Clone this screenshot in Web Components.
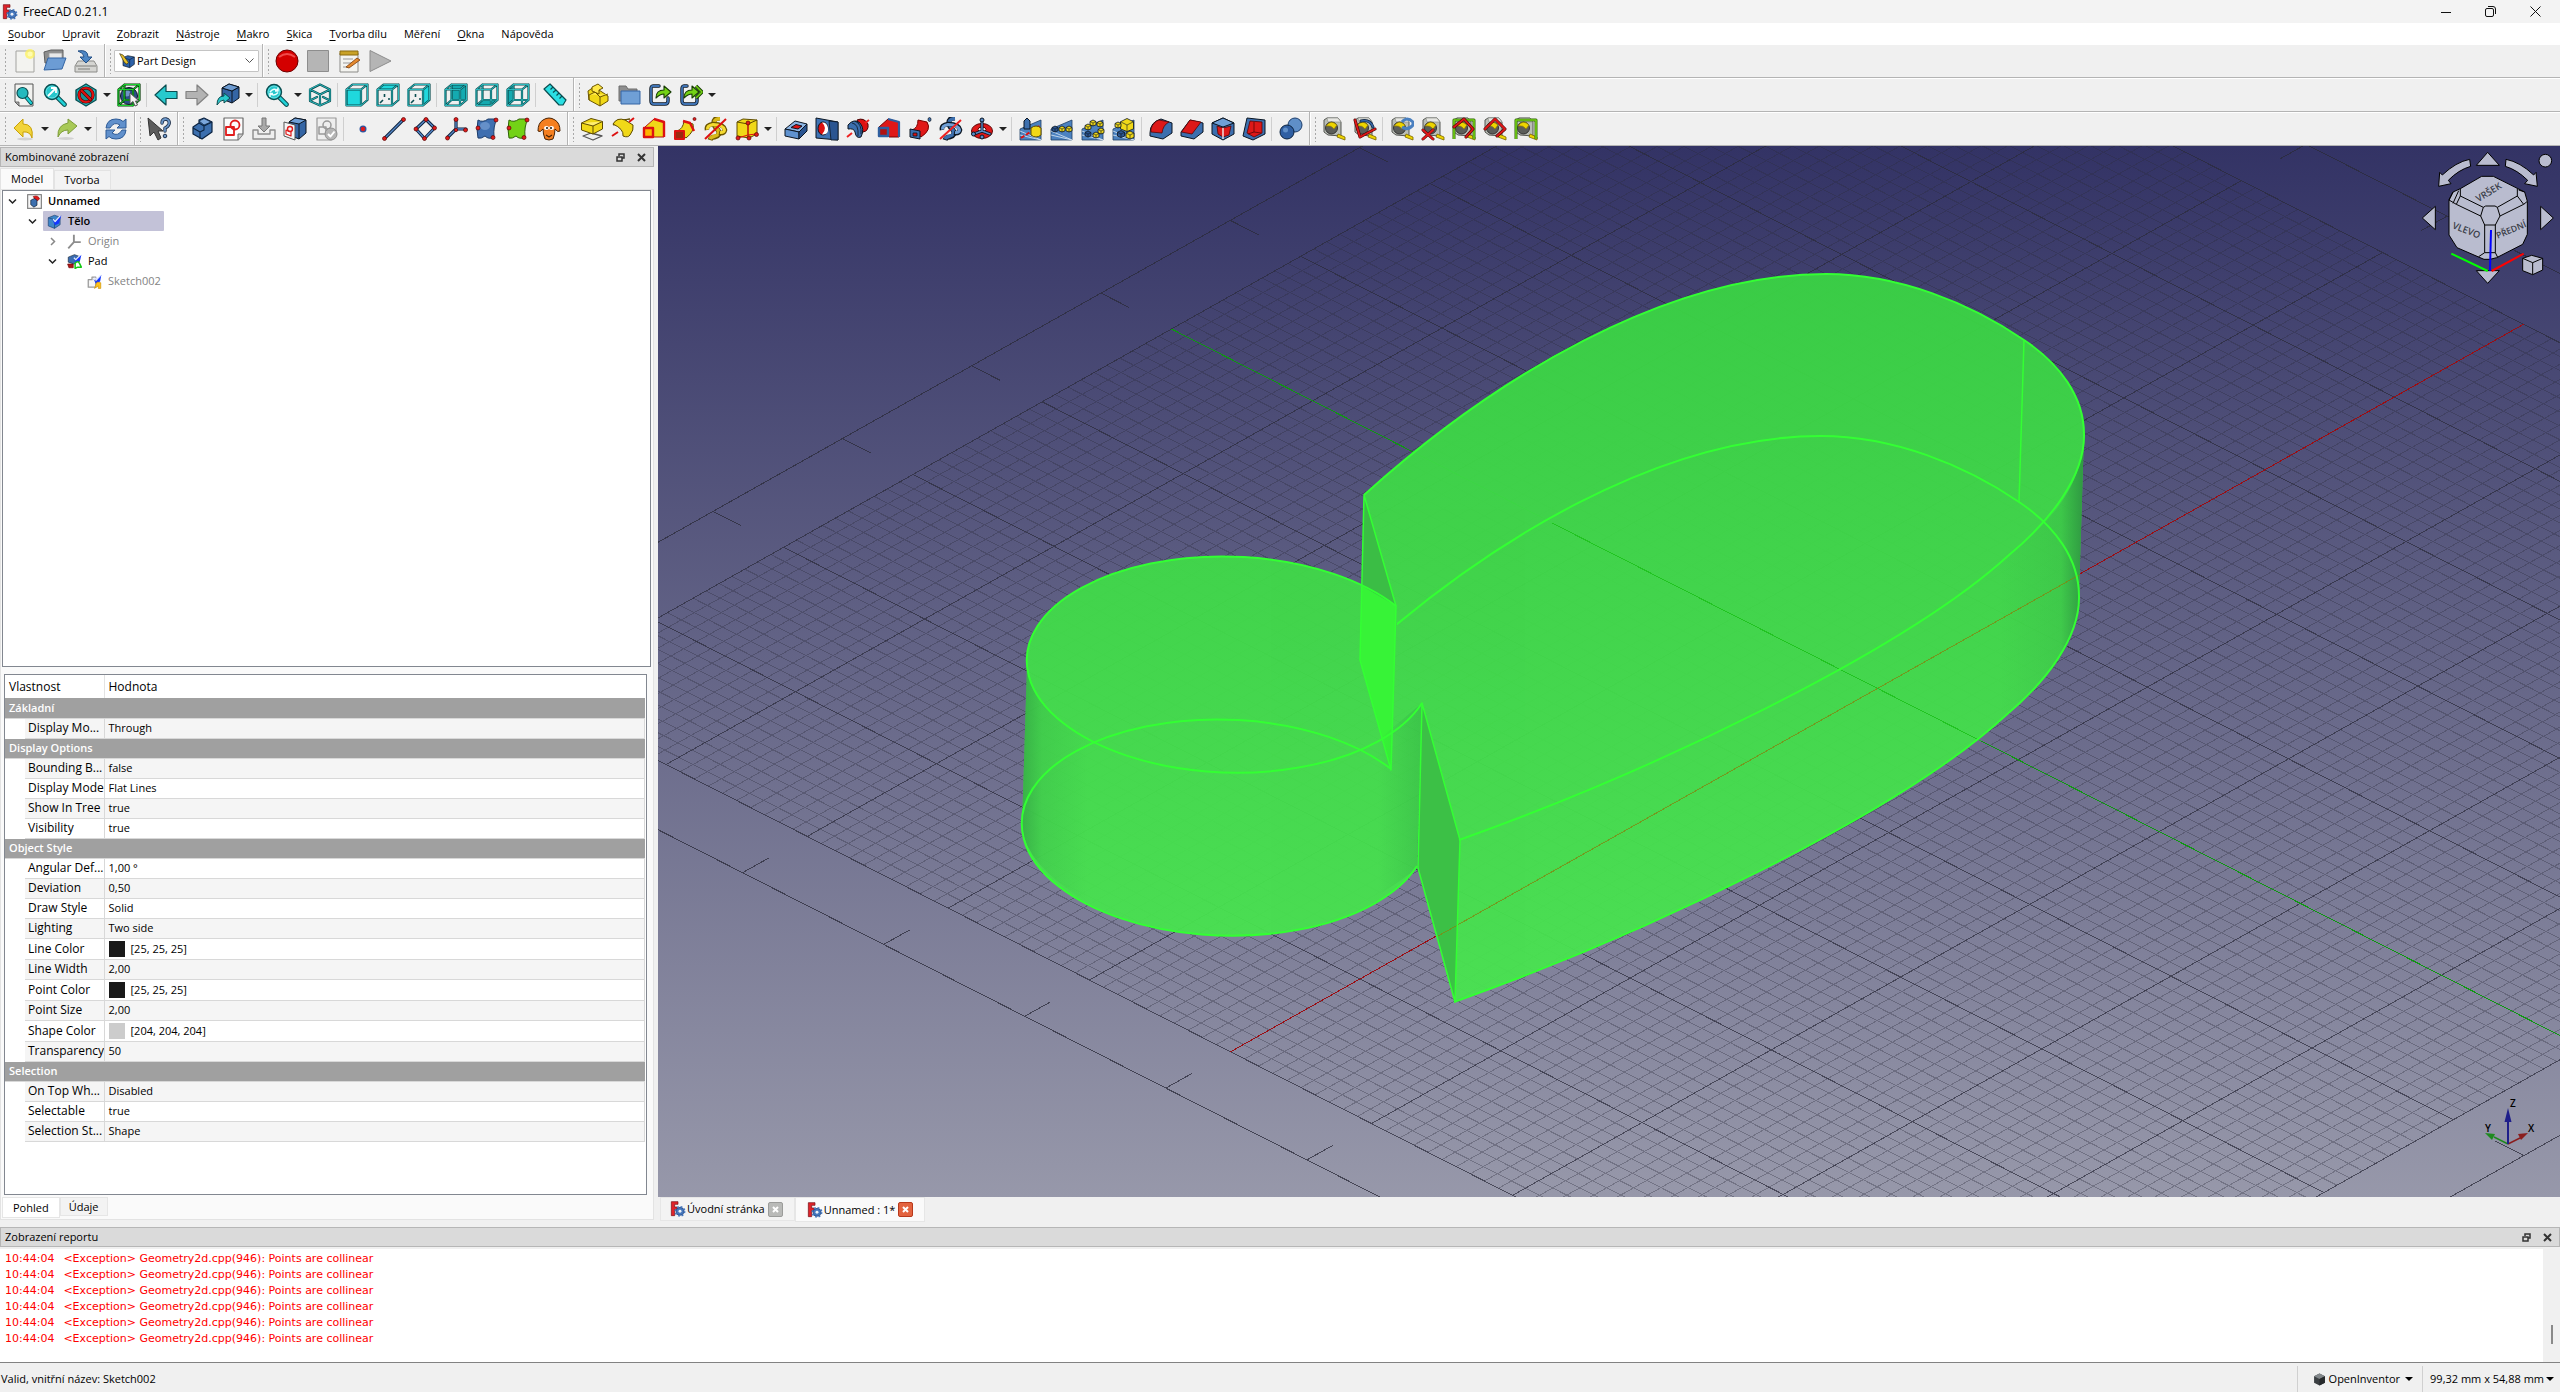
<!DOCTYPE html>
<html lang="cs">
<head>
<meta charset="utf-8">
<title>FreeCAD 0.21.1</title>
<style>
  html, body { margin: 0; height: 100%; overflow: hidden; }
  body { font: 11px/16px "Open Sans", "Noto Sans", sans-serif; color: #000; background: #f0f0f0; }
</style>
</head>
<body>
<app-window></app-window>
<script>
const BASE = `*{box-sizing:border-box} button{font:inherit;color:inherit;background:none;border:0;margin:0;padding:0} svg{display:block}`;
class Base extends HTMLElement {
  connectedCallback() {
    if (this.shadowRoot) return;
    const t = document.createElement('template');
    t.innerHTML = `<style>${BASE}${this.css()}</style>${this.html()}`;
    this.attachShadow({ mode: 'open' }).appendChild(t.content.cloneNode(true));
  }
  css() { return ':host{display:block}'; }
  html() { return '<slot></slot>'; }
}

/* ---------- icon set, 24 x 24 ---------- */
const DK = '#0b1521', BL = '#3c6fae', RD = '#dd1111', YE = '#f0d818';
const P = (d, f = 'none', s = DK, w = 1, x = '') => `<path d="${d}" fill="${f}" stroke="${s}" stroke-width="${w}" stroke-linejoin="round" ${x}/>`;
const dot = (x, y, r = 2) => `<circle cx="${x}" cy="${y}" r="${r}" fill="#e01b1b" stroke="#5c0505" stroke-width=".7"/>`;
const duo = (d, out, inn, w1 = 3.2, w2 = 1.4) => P(d, 'none', out, w1, 'stroke-linecap="round"') + P(d, 'none', inn, w2, 'stroke-linecap="round"');
const F = { front: 'M1.5 6.5H16V22.5H1.5Z', rear: 'M7.5 1.5H22.5V17H7.5Z', top: 'M1.5 6.5L7.5 1.5H22.5L16 6.5Z', bottom: 'M1.5 22.5L7.5 17H22.5L16 22.5Z', right: 'M16 6.5L22.5 1.5V17L16 22.5Z', left: 'M1.5 6.5L7.5 1.5V17L1.5 22.5Z' };
const WIRE = 'M1.5 6.5H16V22.5H1.5ZM7.5 1.5H22.5V17H7.5ZM1.5 6.5L7.5 1.5M16 6.5L22.5 1.5M16 22.5L22.5 17M1.5 22.5L7.5 17';
const WIREF = 'M1.5 6.5H16V22.5H1.5ZM1.5 6.5L7.5 1.5H22.5V17L16 22.5M16 6.5L22.5 1.5';
const wire = k => (/rear|bottom|left/.test(k)
  ? P(F[k], '#14aab0', 'none') + duo(WIRE, '#0a4d50', '#2fc4c8', 2.2, .9)
  : P(F[k], '#1fd8dd', 'none') + P('M4 20l3-3M8.5 11v3M12 16h2', 'none', k == 'front' ? 'none' : '#0a4d50', 1.6) + duo(WIREF, '#0a4d50', '#2fc4c8', 2.2, .9));
const lens = (cx, cy, r, g = '') => duo(`M${cx + r * .7} ${cy + r * .7}L21.5 21.5`, '#0a4d50', '#1fd0d5', 4.6, 2.6) + `<circle cx="${cx}" cy="${cy}" r="${r}" fill="#16b3b8" stroke="#0a4d50" stroke-width="1.4"/><circle cx="${cx}" cy="${cy}" r="${r - 1.5}" fill="#27c7cc" stroke="#7eeef0" stroke-width=".8"/>` + g;
const box = (c1, c2, c3) => P('M1 12L11 4L23 7L15 15Z', c1) + P('M1 12L15 15V22L1 19Z', c2) + P('M15 15L23 7V14L15 22Z', c3);
const tape = P('M2 3L5 1H16L19 5V19L6 18L2 15Z', '#b9bdb6', '#555753') + P('M5 1H16L19 5H6Z', '#e6e6e2', '#888a85', .6) + '<circle cx="9.5" cy="11" r="6" fill="#5b5d5a" stroke="#333"/>' + P('M4 9Q9 2 15 8L12 12Q9 8 4 9Z', '#edd400', '#8f7b00', .7) + P('M16 17L23 20V23L15 20Z', '#edd400', '#7a6500', .8);
const blueBase = P('M1 12L22 3V23L1 23Z', '#4c82c0', '#1d3c63', .8) + P('M1 18L22 23M1 14L22 23', 'none', '#dbe8f5', .8);
const mini = (x, y, c, s = 3) => P(`M${x - s} ${y - s * .5}L${x} ${y - s}L${x + s} ${y - s * .5}V${y + s * .6}L${x} ${y + s}L${x - s} ${y + s * .6}Z`, c, DK, .8) + P(`M${x - s} ${y - s * .5}L${x} ${y}L${x + s} ${y - s * .5}M${x} ${y}V${y + s}`, 'none', DK, .6);
const curl = (c1, c2, e) => P('M16 1Q9 1 10 7Q11 11 14 13Q17 18 11 20Q7 20 6 23', 'none', e, 5) + P('M16 1.500Q9 2 10.500 7Q12 11 14 13Q16 18 11 19Q7 20 6 22', 'none', c1, 3.4) + P('M3 13Q2 8 9 7Q20 7 21 13Q20 17 15 16', 'none', e, 4.6) + P('M3.500 12.500Q3 8.500 9 7.500Q19 7.500 20.500 13Q20 16 16 15.500', 'none', c2, 3);
const arrowR = (x, y, o = '') => P(`M${x} ${y + 12}Q${x} ${y + 4} ${x + 8} ${y + 4}V${y}L${x + 15} ${y + 6}L${x + 8} ${y + 12}V${y + 8}Q${x + 4} ${y + 8} ${x} ${y + 12}Z`, '#73d216', '#173c04', 1.1) + o;
const LOGO = P('M2 1H12V5H7V9H11V13H7V22H2Z', '#e0232a', '#6f0b10', 1) + '<circle cx="15" cy="15.500" r="6" fill="#4577bd" stroke="#1d3c72" stroke-width="1"/><circle cx="15" cy="15.500" r="7" fill="none" stroke="#4577bd" stroke-width="2.400" stroke-dasharray="2.700 2.800"/><circle cx="15" cy="15.500" r="2.200" fill="#eef2f8"/>';
const SKETCH = P('M3 1H22V17L17 23H3Z', '#fbfbfb', '#6a6a6a', 1.2) + P('M17 23V17H22', '#ccc', '#6a6a6a', 1);
const I = {
  logo: LOGO,
  new: P('M4 2H22V23H4Z', '#f3f3f0', '#a3a3a0') + '<circle cx="18" cy="5" r="5" fill="#fff35a" opacity=".75"/><circle cx="18" cy="5" r="2.500" fill="#fffcb0"/>',
  open: P('M1 3L8 1H20V14H2Z', '#8e8e8e', '#5f5f5f') + P('M6 4H19V12H6Z', '#e8e8e8', '#999', .8) + P('M1 21L5 9H23L19 20Z', '#6c9cd4', '#3465a4'),
  save: P('M4 12H20L23 17V23H1V17Z', '#d5d5d2', '#8b8b88') + P('M2 17H22M4 20H16', 'none', '#9a9a98', 1.4) + P('M4 2Q14 0 14 8H18L12 14L6 8H10Q10 4 4 2Z', '#4d86c4', '#234f86'),
  rec: '<circle cx="12" cy="12" r="11" fill="#d40000" stroke="#6d0000"/><path d="M4 8Q12 2 20 8" stroke="#f04a4a" fill="none" stroke-width="2"/>',
  stop: P('M1.500 1.500H22.500V22.500H1.500Z', '#b5b5b5', '#8d8d8d'),
  edit: P('M3 4H21V23H3Z', '#f4f4f0', '#8b8b88') + P('M3 2H21V6H3Z', '#c9a227', '#8b6b10') + P('M6 10H16M6 14H14M6 18H11', 'none', '#999', 1) + P('M9 18L20 9L23 11L12 19Z', '#e58a2e', '#7a3b0a', .8),
  play: P('M2 1.500L23 12L2 22.500Z', '#b5b5b5', '#8d8d8d'),
  fitall: P('M3 1H21V23H7L3 19Z', '#f2f2f0', '#555') + P('M3 19H7V23Z', '#aaa', '#555', .8) + duo('M14 14L19 20', '#0a4d50', '#1fd0d5', 4, 2.2) + '<circle cx="10.500" cy="10" r="5.500" fill="#25b9be" stroke="#0a4d50" stroke-width="1.200"/>',
  fitsel: lens(9, 9, 7.5, P('M5 13L12 6M8 5H13V10', 'none', '#fff', 1.8)),
  noclip: P('M2 7L12 1L22 7V17L12 23L2 17Z', '#1fbcc2', '#0a4d50', 1.4) + '<circle cx="12" cy="12" r="7" fill="#1b8f94" stroke="#3b0303" stroke-width="3.200"/><circle cx="12" cy="12" r="7" fill="none" stroke="#df1010" stroke-width="2.200"/>' + duo('M7.500 7.500L16.500 16.500', '#3b0303', '#df1010', 3.2, 2.2),
  bbox: '<circle cx="12" cy="13" r="8.500" fill="#2d4f8a" stroke="#0b1521"/><circle cx="9.500" cy="10" r="3.500" fill="#6f93c8"/>' + duo(WIRE, '#073b07', '#19d22f', 2.2, 1) + P('M13 10V21L16 18.500L18 23L20.500 22L18.500 18H22Z', '#f2f2f2', '#555'),
  back: P('M1 12L12 2V8.500H23V15.500H12V22Z', '#27c9cd', '#0a4d50', 1.2),
  fwd: P('M23 12L12 2V8.500H1V15.500H12V22Z', '#b3b3b3', '#828282', 1.2),
  link: P('M6 5L13 1L23 4V15L16 20L6 16Z', '#3465a4') + P('M6 5L16 8L23 4M16 8V20', 'none', DK, 1) + P('M6 5L13 1L23 4L16 8Z', '#6d9bd1') + P('M1 22Q1 13 8 13V10L14 15L8 20V17Q4 17 1 22Z', '#27c9cd', '#0a4d50'),
  zoom: lens(9, 9, 7.5, P('M5 9Q9 4 13 8M13 9.500Q9 14 5 10.500M13 4.500V8H10M5 14V10.500H8', 'none', '#eaffff', 1.5)),
  iso: P('M2 6L12 1L22 6V18L12 23L2 18Z', 'none', 'none') + duo('M2 6.500L12 11.500L22 6.500L12 1.500ZM2 6.500V18L12 22.500L22 18V6.500M12 11.500V22.500M3 17L9 14M21 17L15 14', '#0a4d50', '#2fc4c8', 2.2, .9),
  ruler: P('M1 6L7 1L23 17L20 22L16 22Z', '#2adfe3', '#0a4d50', 1.2) + P('M10 4L7.500 6.500M13 7L10 9.500M16 10L13.500 12.500M19 13L16.500 15.500', 'none', '#0a4d50', 1.2),
  part: P('M2 8L8 4L9 9L13 7L22 13V18L14 23L3 17Z', YE, '#6b5500') + P('M6 4L12 1L17 5L13 7V11L6 8ZM3 12L9 9L14 14L22 11M14 14V23M3 12V17', '#ffe94a', '#6b5500'),
  folder: P('M2 3H9L11 6H20V18H2Z', '#8e8e8e', '#6c6c6c') + P('M4 8H23V21H4Z', '#6f9fd6', '#3465a4'),
  export: duo('M11 3H5Q3 3 3 6V18Q3 21 6 21H17Q20 21 20 18V15', DK, '#3f73b4', 3.4, 1.8) + arrowR(8, 3),
  exports: duo('M8 3H5Q3 3 3 6V18Q3 21 6 21H15Q18 21 18 18V15', DK, '#3f73b4', 3.4, 1.8) + arrowR(5, 3, P('M17 3L23 9L17 15', 'none', '#173c04', 3.4) + P('M17 3L23 9L17 15', 'none', '#73d216', 1.6)),
  undo: P('M2 11L11 2V7Q22 7 20 21Q18 14 11 15V20Z', '#f2d43b', '#c7a008') + '<ellipse cx="13" cy="22" rx="8" ry="1.500" fill="#000" opacity=".12"/>',
  redo: P('M22 9L13 2V6Q2 8 3 20Q6 13 13 13V17Z', '#a8c957', '#7d9c3a') + '<ellipse cx="11" cy="21.500" rx="8" ry="1.500" fill="#000" opacity=".12"/>',
  refresh: P('M2 11Q3 2 12 2Q17 2 19 4.500L22 2V11H13L16 8Q10 4 6 11Z', '#6090cc', '#2d5a96') + P('M22 13Q21 22 12 22Q7 22 5 19.500L2 22V13H11L8 16Q14 20 18 13Z', '#6090cc', '#2d5a96'),
  what: P('M1 1L3 19L7 15L11 23L14 21L11 14H16Z', '#5c5c5c', '#333') + duo('M15 6Q15 2 19 2Q23 3 22 7Q21 10 18 11V14', '#1d2f4a', '#6a96c8', 3.4, 1.8) + '<circle cx="18" cy="19" r="1.800" fill="#6a96c8" stroke="#1d2f4a"/>',
  body: P('M3 10L9 6V3L14 1L22 5V15L12 22L3 17Z', BL, '#0b2340', 1.2) + P('M9 6L14 9L22 5M14 9V13L10 15L3 11M10 15V22', 'none', '#0b2340', 1.1) + P('M9 4L14 1.500L21 5L14 8Z', '#7ba7dc', '#0b2340', .8),
  sketch: SKETCH + '<circle cx="14" cy="8" r="4.500" fill="none" stroke="#e01b1b" stroke-width="1.800"/>' + P('M5 10H13V18H5Z', 'none', '#e01b1b', 1.8),
  attach: P('M1 13H6V17H18V13H23V22H1Z', '#eee', '#8d8d8d', 1.4) + P('M10 1H14V9H18L12 15L6 9H10Z', '#a9a9a9', '#777'),
  map: P('M6 5L12 1L23 3V16L16 22L6 18Z', '#3465a4') + P('M6 5L12 1L23 3L16 7Z', '#6f9fd6') + P('M16 7V22', 'none') + P('M1 5L12 8V23L1 19Z', '#f6f6f6', '#555') + '<circle cx="7" cy="12" r="2.500" fill="none" stroke="#e01b1b" stroke-width="1.400"/>' + P('M3 13L8 15V19L3 17Z', 'none', '#e01b1b', 1.2),
  validate: P('M3 1H22V17L17 23H3Z', '#eee', '#999', 1.2) + '<circle cx="13" cy="8" r="4" fill="none" stroke="#999" stroke-width="1.500"/>' + P('M5 10H12V17H5Z', 'none', '#999', 1.5) + '<circle cx="17" cy="17" r="6" fill="#b5b5b5" stroke="#8f8f8f"/>' + P('M14 17L16.500 19.500L20.500 14.500', 'none', '#fff', 2),
  point: '<circle cx="12" cy="12" r="3.500" fill="#2c56a0"/><circle cx="12" cy="12" r="2.200" fill="#e01b1b"/>',
  line: duo('M3 21L21 3', '#0b1f3a', '#5588c8') + dot(2.5, 21.5) + dot(21.5, 2.5),
  plane: duo('M3 12L13 2.500L21.500 11L11.500 21.500Z', '#0b1f3a', '#5588c8') + dot(3, 12) + dot(13, 2.500) + dot(21.5, 11) + dot(11.5, 21.5),
  lcs: duo('M12 2.500V12H22M12 12L4 20', '#0b1f3a', '#5588c8') + dot(12, 2.5) + dot(12, 13, 1.7) + dot(21.5, 13) + dot(3.5, 21),
  binder: P('M3 3Q8 6 13 2L22 2Q18 9 19 20Q14 23 10 19Q6 22 3 21Q1 12 3 3Z', '#3f6fb0', '#1c3d6b') + '<ellipse cx="10" cy="9" rx="5" ry="4" fill="#7fa6da" opacity=".6"/>' + dot(21, 3) + dot(3, 11) + dot(18, 20.5),
  clone: P('M3 3Q8 6 13 2L22 2Q18 9 19 20Q14 23 10 19Q6 22 3 21Q1 12 3 3Z', '#73d216', '#2f6107') + dot(21, 3) + dot(3, 11) + dot(18, 20.5),
  sheep: P('M6 3Q12 -1 18 3Q23 6 23 14Q21 16 18 12Q18 17 16 22Q12 24 8 22Q6 17 6 12Q3 16 1 14Q1 6 6 3Z', '#f57f20', '#4a2305') + '<ellipse cx="9.500" cy="11" rx="2.500" ry="2" fill="#fff"/><ellipse cx="14.500" cy="11" rx="2.500" ry="2" fill="#fff"/><circle cx="10" cy="11" r="1" fill="#111"/><circle cx="14" cy="11" r="1" fill="#111"/>' + P('M9 18L12 20L15 18', 'none', '#4a2305', 1.2),
  pad: P('M3 19L11 16L22 19L13 23Z', '#eee', '#555', 1.3) + P('M1.500 6L11 1.500L22.500 4.500V12L13 17L1.500 13Z', YE, '#5e4b00') + P('M1.500 6L13 9L22.500 4.500M13 9V17', '#ffee70', '#5e4b00', 1),
  revol: P('M2 8Q5 2 10 3L19 2Q14 2 14 6Z', YE, '#5e4b00') + P('M2 7Q6 0 14 3L22 8Q23 13 19 18Q17 21 12 19Q13 12 2 7Z', YE, '#5e4b00') + P('M1 19L7 15M18 5L23 1', 'none', '#d11', 2),
  loft: P('M3 10L12 2L22 5V20L12 20Z', YE, '#b01010') + P('M2 11H11V20H2Z', '#ffb400', '#d11', 2.4) + P('M12 2L22 5V20', 'none', '#d11', 2.4),
  pipe: P('M4 14Q10 12 11 4L20 7Q22 14 13 21Z', YE, '#5e4b00') + P('M10 4L17 6L21 14', 'none', '#d11', 2.4) + P('M2 14H11V22H2Z', '#9b2a10', '#d11', 2) + dot(21.500, 2, 1.5),
  helix: curl('#d9b918', '#f4da30', '#6b5500') + P('M1 22L22 2', 'none', '#d11', 2),
  prim: P('M2 5L8 2L22 3V17L14 21L2 19Z', YE, '#5e4b00') + P('M2 5L13 7L22 3M13 7V20', 'none', '#5e4b00', 1) + P('M13 6V18L3 21M13 18L21 17', 'none', '#d11', 1.2) + dot(13, 6) + dot(3, 21) + dot(14, 21) + dot(21.5, 17.5),
  pocket: box('#8db5e4', '#5f92cf', '#2a5591') + P('M7 10.500L12 7.500L18 9L14 12Z', '#d11', DK, 1),
  hole: P('M1 1L23 5V23L1 21Z', '#3f73b4') + P('M14 4L23 5V23H16Z', '#2a5591', DK, .8) + '<ellipse cx="8" cy="11.500" rx="5" ry="6.500" fill="#d11" stroke="#0b1521"/><path d="M7 5.500Q13 11 7 17.500Q14 18 13 11Q12 5 7 5.500Z" fill="#fff"/>',
  groove: P('M11 3Q18 0 22 7Q23 14 17 15Z', '#d11', '#4a0505') + P('M2 8Q8 1 14 6Q19 12 15 20Q10 22 9 15Q8 11 2 12Z', BL) + P('M6 6Q13 7 12 19M9 4Q16 7 15 17', 'none', DK, .8) + P('M1 20L6 16M19 6L23 3', 'none', '#e22', 2),
  subloft: P('M2 10L11 2L22 5V20L12 20Z', '#e01818', '#700') + P('M2 11H11V19H2Z', '#b01010', '#2f5f9f', 2.4) + P('M11 2L22 5V20', 'none', '#2f5f9f', 2.2),
  subpipe: P('M4 13Q10 11 10 3L19 5Q24 13 13 20Z', '#e01818', '#700') + P('M2 12L12 14V22L2 20Z', BL) + P('M5 16H9V19H5Z', '#d11', DK, .8) + '<ellipse cx="21.500" cy="2.500" rx="1.500" ry="2" fill="#3c6fae" stroke="#0b1521" stroke-width=".7"/>',
  subhelix: curl('#3c6fae', '#6f9fd6', DK) + P('M1 22L22 3', 'none', '#e22', 2),
  subprim: '<ellipse cx="12" cy="14" rx="10.500" ry="7.500" fill="#e01818" stroke="#5a0505"/><ellipse cx="12" cy="12.500" rx="4" ry="2.500" fill="#f0f0f0" stroke="#5a0505"/>' + duo('M12 3V14M12 14L4 17M12 14L20 17', DK, '#5a8cc8', 3, 1.4) + '<circle cx="12" cy="3" r="2" fill="#5a8cc8" stroke="#0b1521"/><circle cx="3.500" cy="17" r="2" fill="#5a8cc8" stroke="#0b1521"/><circle cx="12" cy="20" r="2" fill="#5a8cc8" stroke="#0b1521"/>',
  mirror: blueBase + P('M5 4L8 1L11 4V12H5Z', BL) + P('M2 21L22 8', 'none', '#d11', 2, 'stroke-dasharray="4 2"') + P('M12 11Q17 7 22 11V18Q17 22 12 18Z', YE, '#5e4b00'),
  linear: blueBase + mini(5, 12, '#2a5591') + mini(12, 12, YE) + mini(19, 12, YE),
  polar: blueBase + mini(12, 6, YE) + mini(19, 7, YE) + mini(20, 14, YE) + mini(7, 10, YE) + mini(7, 17, '#2a5591') + mini(15, 18, YE),
  multi: blueBase + mini(15, 8, YE, 6.5) + mini(6, 8, YE, 3) + mini(9, 17, '#2a5591', 3.5) + mini(18, 18, YE, 4),
  fillet: P('M1 16Q1 5 12 2L23 6V16L14 22L1 19Z', BL) + P('M2 12Q4 5 10 3L20 5Q14 8 13 16L2 15Z', '#dd1818', '#5a0505', .8),
  chamfer: P('M1 15L10 3L23 6V15L14 22L1 19Z', BL) + P('M1.500 15L10 3L21 5L12 17Z', '#dd1818', '#5a0505', .8),
  draft: P('M1 6L12 1L23 6V17L12 23L1 17Z', BL) + P('M1 6L12 10L23 6L12 1Z', '#6f9fd6') + P('M6 9L12 11L20 9L18 18L12 20L7 17Z', '#dd1818', '#5a0505', .8) + P('M12 11V22', 'none', '#eee', 1.4),
  thick: P('M1 19L5 1L23 3V17L11 23Z', BL) + P('M5 16L8 4L20 5V16L12 20Z', '#dd1818', '#5a0505', .8) + P('M12 5V15L6 17M12 15L19 16', 'none', '#5a0505', .8),
  bool: '<circle cx="16" cy="8" r="7" fill="#5f8fc8" stroke="#1c3d6b"/><circle cx="8" cy="15" r="7" fill="#2f5fa3" stroke="#0b2340"/><circle cx="6.500" cy="13" r="2.500" fill="#5f8fc8"/>',
  mlin: tape,
  mang: tape + duo('M2 3L7 20L22 12', '#4a0505', '#e01818', 3, 1.8) + duo('M8 4Q17 2 20 10', '#0b1f3a', '#3465a4', 3, 1.6),
  mref: tape + P('M12 5Q17 -1 23 5V9M23 8Q18 14 12 10', 'none', '#4a80c0', 3),
  mclr: tape + duo('M2 13L12 22M12 13L2 22', '#4a0505', '#e01818', 3, 2),
  mtog: tape + P('M2 22V3H22V22', 'none', '#2f6107', 3) + P('M2 22V3H22V22', 'none', '#73d216', 1.6) + duo('M2 10L12 2L21 12L14 20', '#4a0505', '#e01818', 3, 1.8),
  m3d: tape + duo('M2 12L12 2L22 12L14 19', '#4a0505', '#e01818', 3, 1.8),
  mdel: tape + P('M2 22V3H22V22', 'none', '#2f6107', 3) + P('M2 22V3H22V22', 'none', '#73d216', 1.6),
  design: P('M6 7L13 4L23 6V17L16 22L6 19Z', '#2d61a8') + P('M6 7L16 10L23 6M16 10V22', 'none', '#0b2340') + P('M1 1L6 3L14 14L12 17L8 14Z', '#e8c32a', '#3a2d05'),
  doc: P('M1 1H23V23H1Z', '#f7f7f7', '#888', 2) + P('M10 4Q18 1 20 8L15 12Z', '#e01818', '#800') + P('M6 10L12 7L16 10V18L11 21L6 17Z', '#3c6fae'),
  bodyt: P('M2 6L12 2L21 5V17L12 23L2 19Z', '#3e86c9', '#1c3d6b') + P('M12 9V23M2 6L12 9', 'none', '#1c3d6b') + P('M8 8L12 13L23 2L19 15L13 18Z', '#1437ff', 'none') + P('M10 8L13 12L21 3', 'none', '#dfe6ff', 2),
  origin: P('M11 1V13H22M11 13L2 23', 'none', '#8d8d8d', 3),
  padt: P('M2 5L12 1L20 4V12L11 16L2 13Z', '#3a6db0', '#123') + P('M1 16H10V22H3Z', '#b01818', '#600') + P('M9 6L13 11L23 1L21 10L14 14Z', '#1437ff', 'none') + P('M11 6L14 9L21 2', 'none', '#dfe6ff', 2) + P('M13 15Q17 10 20 15L23 21H17L13 23Z', '#fff', '#12c812', 2.4),
  skt: P('M2 9H8V5H14V21H2Z', '#f5f5f5', '#999', 2) + P('M10 7L14 12L23 1L21 12L14 15Z', '#1437ff', 'none') + P('M12 6L15 9L22 2', 'none', '#dfe6ff', 2) + P('M12 23L16 13L22 14V23H18V19Z', '#ffc31a', '#c98b00', 1),
  cube: P('M2 6L12 1L22 6V18L12 23L2 18Z', '#3b3f42', 'none') + P('M2 6L12 1L22 6L12 11Z', '#83888b', 'none') + P('M12 11L22 6V18L12 23Z', '#26292b', 'none')
};
for (const k in F) I['v' + k] = wire(k);
customElements.define('ui-icon', class extends Base {
  css() { const s = this.getAttribute('size') || 24; return `:host{display:block;flex:none;width:${s}px;height:${s}px} svg{width:100%;height:100%}`; }
  html() { return `<svg viewBox="0 0 24 24" aria-hidden="true">${I[this.getAttribute('name')]}</svg>`; }
});

/* ---------- window chrome ---------- */
customElements.define('title-bar', class extends Base {
  css() { return `:host{display:flex;align-items:center;height:23px;background:#f3f3f3;padding-left:2px;gap:5px;font-size:12px}
    .w{flex:1;display:flex;justify-content:flex-end;padding-right:2px} button{width:45px;height:22px;display:grid;place-items:center}`; }
  html() { return `<ui-icon name="logo" size="16"></ui-icon><span>FreeCAD 0.21.1</span><div class="w">
    <button aria-label="Minimalizovat"><svg width="10" height="10"><path d="M0 5.500H10" stroke="#111"/></svg></button>
    <button aria-label="Obnovit"><svg width="11" height="11" fill="none" stroke="#111"><rect x=".5" y="2.500" width="8" height="8" rx="1.500"/><path d="M3 .5H8Q10.500 .5 10.500 3V8"/></svg></button>
    <button aria-label="Zavřít"><svg width="11" height="11"><path d="M.5 .5L10.500 10.500M10.500 .5L.5 10.500" stroke="#111"/></svg></button></div>`; }
});
customElements.define('menu-bar', class extends Base {
  css() { return `:host{display:flex;align-items:center;height:21px;background:#fff;padding-left:8px;gap:17px} button{height:20px} u{text-underline-offset:2px}`; }
  html() { return ['_Soubor', '_Upravit', '_Zobrazit', '_Nástroje', '_Makro', '_Skica', '_Tvorba dílu', 'Měření', '_Okna', 'Nápověda'].map(m => `<button>${m.replace(/_(.)/, '<u>$1</u>')}</button>`).join(''); }
});
/* items: icon names, "v" = drop-down arrow, "|" = separator */
customElements.define('tool-bar', class extends Base {
  css() { return `:host{display:flex;align-items:center;height:33px;padding-right:3px;border-right:1px solid #b4b4b4;box-shadow:1px 0 #fff}
    :host([last]){border-right-color:transparent;box-shadow:none}
    .g{width:8px;height:26px;background:radial-gradient(circle,#a8a8a8 1px,transparent 1px) 4px 0/3px 4px repeat-y;flex:none;margin:0}
    button{width:31px;height:30px;display:grid;place-items:center} .v{width:12px} .s{width:1px;height:24px;background:#cfcfcf;margin:0 3px 0 2px}`; }
  html() { const it = (this.getAttribute('items') || '').split(' ').filter(Boolean);
    return '<span class="g"></span>' + it.map(n => n == 'v' ? `<button class="v" aria-label="Další"><svg width="8" height="4"><path d="M0 0H8L4 4Z" fill="#222"/></svg></button>` : n == '|' ? '<span class="s"></span>' : `<button aria-label="${n}"><ui-icon name="${n}"></ui-icon></button>`).join('') + '<slot></slot>'; }
});
customElements.define('workbench-select', class extends Base {
  css() { return `:host{display:block;padding-left:1px} label{display:grid;grid-template-columns:145px;align-items:center}
    label>*{grid-area:1/1} select{appearance:none;width:145px;height:22px;border:1px solid #c4c4c4;background:#fff;font:inherit;color:#000;padding:0 20px 0 22px;border-radius:1px}
    ui-icon{margin-left:5px;z-index:1} svg.c{justify-self:end;margin-right:5px;z-index:1}`; }
  html() { return `<label><select aria-label="Pracovní prostředí"><option>Part Design</option></select><ui-icon name="design" size="16"></ui-icon><svg class="c" width="9" height="6" fill="none" stroke="#555"><path d="M.5 .5L4.500 4.500L8.500 .5"/></svg></label>`; }
});
customElements.define('tool-row', class extends Base {
  css() { return `:host{display:flex;height:34px;background:#f0f0f0;border-bottom:1px solid #b4b4b4;box-shadow:inset 0 1px #fff}`; }
});

/* ---------- docks ---------- */
customElements.define('dock-title', class extends Base {
  css() { return `:host{display:flex;align-items:center;height:20px;flex:none;background:#dadada;border:1px solid #b6b6b6;padding:0 4px;gap:6px} slot{display:block;flex:1} button{width:15px;height:15px;display:grid;place-items:center}`; }
  html() { return `<slot></slot><button aria-label="Odpojit"><svg width="9" height="9" fill="none" stroke="#333" stroke-width="1.500"><path d="M3 3V1H8V5H6"/><path d="M1 4H6V8H1Z"/></svg></button><button aria-label="Zavřít"><svg width="9" height="9" stroke="#333" stroke-width="2"><path d="M1 1L8 8M8 1L1 8"/></svg></button>`; }
});
customElements.define('tree-item', class extends Base {
  css() { const l = +this.getAttribute('level') || 0; return `:host{display:flex;align-items:center;height:20px;padding-left:${1 + l * 20}px;color:${this.hasAttribute('dim') ? '#838383' : '#000'};${this.hasAttribute('bold') ? 'font-weight:600' : ''}}
    .c{width:16px;height:20px;display:grid;place-items:center;margin-right:${this.hasAttribute('sel') ? 3 : 7}px}
    .b{display:flex;align-items:center;height:20px;gap:6px} .sel{background:#c3c2d8;width:121px;padding-left:4px;border-radius:1px}`; }
  html() { const o = this.getAttribute('open'); return `<span class="c">${o == null ? '' : `<svg width="9" height="9" fill="none" stroke="${o == '1' ? '#222' : '#888'}" stroke-width="1.500"><path d="${o == '1' ? 'M1 2.500L4.500 6L8 2.500' : 'M3 1L6.500 4.500L3 8'}"/></svg>`}</span><span class="b ${this.hasAttribute('sel') ? 'sel' : ''}"><ui-icon name="${this.getAttribute('icon')}" size="15"></ui-icon><slot></slot></span>`; }
});
customElements.define('property-table', class extends Base {
  css() { return `:host{display:block;background:#fff;border:1px solid #828790;overflow:hidden;padding-right:1px;font-size:12px}
    table{width:100%;border-collapse:collapse;table-layout:fixed;white-space:nowrap}
    td,th{padding:0;text-align:left;font-weight:400;height:20px;line-height:16px;overflow:hidden}
    thead th{height:23px;padding-left:4px} thead th+th{border-left:1px solid #e3e3e3}
    .g th{background:#a0a0a0;color:#fff;font-weight:600;padding-left:4px;border-bottom:1px solid #d8d8d8;font-size:11px}
    .i{width:20px} .n{width:79px} tbody .n{padding-left:3px} tbody .n,.x{border-bottom:1px solid #d8d8d8} .x{padding-left:4px;border-left:1px solid #d8d8d8;border-right:1px solid #d8d8d8}
    .x{font-size:11px} .a .n,.a .x{background:#f5f5f5} .k td{height:21px} i{display:inline-block;width:16px;height:16px;margin-right:6px;vertical-align:top}`; }
  html() { const R = [['Základní'], ['Display Mo...', 'Through', 1], ['Display Options'], ['Bounding B...', 'false', 1], ['Display Mode', 'Flat Lines'], ['Show In Tree', 'true', 1], ['Visibility', 'true'], ['Object Style'], ['Angular Def...', '1,00 °'], ['Deviation', '0,50', 1], ['Draw Style', 'Solid'], ['Lighting', 'Two side', 1], ['Line Color', '[25, 25, 25]', 0, '#191919'], ['Line Width', '2,00', 1], ['Point Color', '[25, 25, 25]', 0, '#191919'], ['Point Size', '2,00', 1], ['Shape Color', '[204, 204, 204]', 0, '#cccccc'], ['Transparency', '50', 1], ['Selection'], ['On Top Wh...', 'Disabled', 1], ['Selectable', 'true'], ['Selection St...', 'Shape', 1]];
    return `<table><colgroup><col class="i"><col class="n"><col></colgroup><thead><tr><th colspan="2">Vlastnost</th><th>Hodnota</th></tr></thead><tbody>` + R.map(r => r.length == 1 ? `<tr class="g"><th colspan="3">${r[0]}</th></tr>` : `<tr class="${r[2] ? 'a' : ''} ${r[3] ? 'k' : ''}"><td></td><td class="n">${r[0]}</td><td class="x">${r[3] ? `<i style="background:${r[3]}"></i>` : ''}${r[1]}</td></tr>`).join('') + '</tbody></table>'; }
});
customElements.define('combo-view', class extends Base {
  css() { return `:host{display:flex;flex-direction:column;width:654px;flex:none;padding:1px 0 6px}
    .tabs{display:flex;align-items:flex-end;height:22px;flex:none} .tabs button{padding:0 10px 0 9px;height:19px;background:#f3f3f3;border:1px solid #e3e3e3;border-bottom:0}
    .tabs .on{background:#fafafa;height:21px;padding:0 10px 1px 10px}
    .pane{flex:1;display:flex;flex-direction:column;background:#fafafa;border:1px solid #e3e3e3;padding:0 2px 0 1px;min-height:0}
    .tree{flex:11 1 0;background:#fff;border:1px solid #828790;min-height:0}
    property-table{flex:12 1 0;min-height:0;margin:7px 4px 0 2px}
    .bot{display:flex;height:24px;flex:none;align-items:flex-start;padding-top:2px} .bot button{height:19px;padding:0 8px;background:#f3f3f3;border:1px solid #e6e6e6}
    .bot .on{background:#fff;height:21px;padding:1px 10px 0 10px}`; }
  html() { return `<dock-title>Kombinované zobrazení</dock-title><div class="tabs"><button class="on">Model</button><button>Tvorba</button></div>
    <div class="pane"><div class="tree">
      <tree-item level="0" open="1" icon="doc" bold>Unnamed</tree-item>
      <tree-item level="1" open="1" icon="bodyt" bold sel>Tělo</tree-item>
      <tree-item level="2" open="0" icon="origin" dim>Origin</tree-item>
      <tree-item level="2" open="1" icon="padt">Pad</tree-item>
      <tree-item level="3" icon="skt" dim>Sketch002</tree-item></div>
      <property-table></property-table><div class="bot"><button class="on">Pohled</button><button>Údaje</button></div></div>`; }
});

/* ---------- 3D view ---------- */
customElements.define('nav-cube', class extends Base {
  css() { return `:host{display:block;width:180px;height:160px} svg{width:100%;height:100%} text{font:600 28px "Open Sans",sans-serif;fill:#3a3c48;text-anchor:middle}`; }
  html() { return `<svg viewBox="0 0 540 480"><g fill="#b9bccf" stroke="#000" stroke-width="3" stroke-linejoin="round">
    <path d="M323 37L358 76H289ZM323 430L289 392H358ZM127 234L166 199V269ZM520 234L482 199V269Z"/><circle cx="496" cy="62" r="19"/>
    <path d="M269 58Q228 66 187 105L179 97L176 139L213 131L205 121Q235 90 272 79ZM378 58Q420 66 461 105L468 97L472 139L434 131L443 121Q412 90 376 79Z"/>
    <path d="M305 109H340L412 145L434 156L442 184V283L428 313L350 353L330 358H312L231 323L207 285V180L219 156L241 146Z"/>
    <path fill="none" d="M241 146V168L310 202L317 198H345L352 202L412 168V145M241 168L229 193L302 228L314 255H346L360 228L431 193L412 168M310 202L302 228M352 202L360 228M219 156L207 180L229 193M219 190L236 152M442 184L431 193M434 156L416 150M314 255V338L296 350M346 255V338L353 352M314 338H346"/>
    <path d="M428 355L455 346L488 355V390L458 404L428 392Z"/><path fill="none" d="M428 355L458 368L488 355M458 368V404"/></g>
    <text transform="translate(331 165) rotate(-31)">VRŠEK</text><text transform="translate(256 280) rotate(21)">VLEVO</text><text transform="translate(397 278) rotate(-23)" style="font-size:26px">PŘEDNÍ</text>
    <g stroke-width="6" fill="none"><path stroke="#00ff00" d="M214 341L323 393"/><path stroke="#ff0000" d="M431 341L335 393"/><path stroke="#0000ff" d="M333 270L330 392"/></g></svg>`; }
});
customElements.define('axis-cross', class extends Base {
  css() { return `:host{display:block;width:60px;height:56px} svg{width:100%;height:100%} text{font:600 10px "Open Sans",sans-serif}`; }
  html() { return `<svg viewBox="0 0 60 56"><g fill="none" stroke-width="1.500"><path stroke="#1e8a1e" d="M28 46L14 39"/><path stroke="#8a1e1e" d="M28 46L42 39"/><path stroke="#1e1e8a" stroke-width="2" d="M28 46V18"/></g><path fill="#1e1e8a" d="M28 10L31.500 24H24.500Z"/><path fill="#1e8a1e" d="M5 35L15 36L12 42Z"/><path fill="#8a1e1e" d="M48 35L38 36L41 42Z"/><text x="30" y="9">Z</text><text x="5" y="34">Y</text><text x="48" y="34">X</text></svg>`; }
});
customElements.define('model-view', class extends Base {
  css() { return `:host{display:block;position:relative;overflow:hidden;background:linear-gradient(#333365,#9798aa)}
    .scene{width:100%;height:100%} nav-cube{position:absolute;right:0;top:-6px} axis-cross{position:absolute;right:20px;bottom:43px}`; }
  html() {
    const O = [1219, 542], u = [129.3, -72.75], v = [141.1, 71.8];
    const pt = (a, b) => (O[0] + a * u[0] + b * v[0]).toFixed(1) + ' ' + (O[1] + a * u[1] + b * v[1]).toFixed(1);
    const seg = (a, b, c, d) => `M${pt(a, b)}L${pt(c, d)}`;
    let minor = '', major = '', frame = '';
    for (let i = -50; i <= 50; i++) { const k = i / 10, s = seg(k, -5, k, 5) + seg(-5, k, 5, k); if (i % 10) minor += s; else if (i) major += s; }
    for (const e of [-5.5, 5.5]) { frame += seg(e, -5.5, e, 5.5) + seg(-5.5, e, 5.5, e); const t = e - Math.sign(e) * .2; for (let k = -5; k <= 5; k++) frame += seg(e, k, t, k) + seg(k, e, k, t); }
    /* blade outline at the top of the pad; the bottom one is the same, shifted by (-5, 162) */
    const upper = 'C836 232 1008 128 1168 128C1240 128 1312 157 1366 194C1402 218 1426 251 1426 288';
    const top = 'M706 349' + upper + 'C1427 330 1393 374 1351 409C1246 505 995 625 801 694';
    const cyl = 'M738 460A203 108 1.6 1 0 764 557';
    return `<svg class="scene" viewBox="0 0 1902 1051" preserveAspectRatio="xMidYMid slice" aria-label="3D pohled">
      <defs><linearGradient id="b" gradientUnits="userSpaceOnUse" x1="0" y1="128" x2="0" y2="860"><stop offset="0" stop-color="#3ad344"/><stop offset="1" stop-color="#49e450"/></linearGradient>
      <linearGradient id="r" gradientUnits="userSpaceOnUse" x1="1340" y1="0" x2="1424" y2="0"><stop offset="0" stop-color="#2b8a40" stop-opacity="0"/><stop offset=".75" stop-color="#2b8a40" stop-opacity=".15"/><stop offset="1" stop-color="#2b8a40" stop-opacity=".75"/></linearGradient>
      <linearGradient id="l" gradientUnits="userSpaceOnUse" x1="364" y1="0" x2="430" y2="0"><stop offset="0" stop-color="#2b8a40" stop-opacity=".5"/><stop offset=".3" stop-color="#2b8a40" stop-opacity=".15"/><stop offset="1" stop-color="#2b8a40" stop-opacity="0"/></linearGradient>
      <linearGradient id="q" gradientUnits="userSpaceOnUse" x1="720" y1="0" x2="764" y2="0"><stop offset="0" stop-color="#2b9a40" stop-opacity="0"/><stop offset="1" stop-color="#2b9a40" stop-opacity=".3"/></linearGradient>
      <clipPath id="c"><path d="M739 0H1902V1051H739Z"/></clipPath></defs>
      <g fill="none" shape-rendering="crispEdges" stroke="#2b2b3a"><path d="${minor}" stroke-opacity=".32"/><path d="${major}" stroke-opacity=".7"/><path d="${frame}" stroke-opacity=".75"/>
      <path d="${seg(-5, 0, 5, 0)}" stroke="#9b0d12"/><path d="${seg(0, -5, 0, 5)}" stroke="#0f9612"/></g>
      <g opacity=".95" fill="url(#b)"><path d="M706 349${upper}L1421 450C1422 492 1388 536 1346 571C1241 667 990 787 796 856L801 694Z"/>
      <path d="M738 460A203 108 1.6 0 0 369 519L364 681A203 108 1.6 0 0 759 720L764 557Z"/><path d="M734 458H780V600L734 610Z"/></g>
      <path d="M706 349L738 460L704 440Z" fill="#3bbd45"/><path d="M704 440L738 460L733 624L702 514Z" fill="#37f337"/>
      <path d="M764 557L802 694L797 856L760 722Z" fill="#3cc046"/>
      <path d="M1340 418Q1372 394 1386 377C1410 355 1426 319 1426 288L1421 450C1421 481 1405 517 1381 539L1340 574Z" fill="url(#r)"/>
      <path d="M369 519L364 681Q368 720 430 756V594Q372 560 369 519Z" fill="url(#l)"/><path d="M764 557L760 722L720 750V594Z" fill="url(#q)"/>
      <g fill="none" shape-rendering="crispEdges"><path d="M780 790L1421 429" stroke="#7f8a14" stroke-opacity=".8"/><path d="M894 377L1323 595" stroke="#22c322"/></g>
      <g fill="none" stroke="#33ff33" stroke-width="2" stroke-linejoin="round"><path d="${top}"/><path d="${cyl}"/>
      <path transform="translate(-5 163)" d="${cyl}"/><g clip-path="url(#c)"><path transform="translate(-5 162)" d="${top}"/></g>
      <path stroke-width="1.500" d="M706 349L738 460L733 624L702 514ZM764 557L802 694L797 856L760 722ZM1366 194L1361 356"/></g></svg>
      <nav-cube></nav-cube><axis-cross></axis-cross>`;
  }
});
customElements.define('view-tabs', class extends Base {
  css() { return `:host{display:flex;height:29px;flex:none;padding-left:2px} .t{display:flex;align-items:center;height:24px;padding:0 11px 0 9px;gap:1px;background:#f3f3f3;border:1px solid #e6e6e6} .on{background:#fafafa;height:25px;padding-left:11px}
    .t button:last-child{width:15px;height:15px;border-radius:2px;background:#b9bab8;border:1px solid #9b9c9a;display:grid;place-items:center;margin-left:2px} .on button:last-child{background:#e3633f;border-color:#b8391c}`; }
  html() { const x = '<svg width="7" height="7" stroke="#fff" stroke-width="2"><path d="M1 1L6 6M6 1L1 6"/></svg>';
    return `<div class="t"><ui-icon name="logo" size="16"></ui-icon><button>Úvodní stránka</button><button aria-label="Zavřít">${x}</button></div><div class="t on"><ui-icon name="logo" size="16"></ui-icon><button>Unnamed : 1*</button><button aria-label="Zavřít">${x}</button></div>`; }
});
customElements.define('report-view', class extends Base {
  css() { return `:host{display:flex;flex-direction:column;height:137px;flex:none;padding-top:1px}
    .b{flex:1;min-height:0;margin-top:2px;background:#fff;border-bottom:1px solid #828282;display:flex;overflow:hidden}
    .l{flex:1;display:flex;flex-direction:column;justify-content:flex-end;padding:0 0 15px 5px;color:#f00;font:11px/16px "DejaVu Sans","Noto Sans",sans-serif} .l div{display:flex;gap:9px}
    .s{width:17px;background:#f0f0f0;display:flex;justify-content:center;align-items:flex-end;padding-bottom:18px} .s i{width:2px;height:19px;background:#8a8a8a}`; }
  html() { return `<dock-title>Zobrazení reportu</dock-title><div class="b"><div class="l">${'<div><span>10:44:04</span><span>&lt;Exception&gt; Geometry2d.cpp(946): Points are collinear</span></div>'.repeat(7)}</div><div class="s"><i></i></div></div>`; }
});
customElements.define('status-bar', class extends Base {
  css() { return `:host{display:flex;align-items:center;height:29px;flex:none;padding:3px 6px 0 1px} .m{flex:1} button{display:flex;align-items:center;gap:3px;height:26px;border-left:1px solid #d0d0d0;padding-left:7px} .o{padding:0 9px 0 15px} .o svg{margin-left:2px} .r{gap:2px}`; }
  html() { const a = '<svg width="8" height="4"><path d="M0 0H8L4 4Z"/></svg>'; return `<span class="m">Valid, vnitřní název: Sketch002</span><button class="o"><ui-icon name="cube" size="13"></ui-icon>OpenInventor${a}</button><button class="r">99,32 mm x 54,88 mm${a}</button>`; }
});
customElements.define('app-window', class extends Base {
  css() { return `:host{display:flex;flex-direction:column;height:100vh;background:#f0f0f0} main{flex:1;display:flex;gap:4px;min-height:0} .v{flex:1;display:flex;flex-direction:column;min-width:0} model-view{flex:1;min-height:0}`; }
  html() { return `<title-bar></title-bar><menu-bar></menu-bar>
    <tool-row><tool-bar items="new open save"></tool-bar><tool-bar><workbench-select></workbench-select></tool-bar><tool-bar last items="rec stop edit play"></tool-bar></tool-row>
    <tool-row><tool-bar items="fitall fitsel noclip v bbox | back fwd link v | zoom v iso | vfront vtop vright | vrear vbottom vleft | ruler"></tool-bar><tool-bar last items="part folder export exports v"></tool-bar></tool-row>
    <tool-row><tool-bar items="undo v redo v | refresh"></tool-bar><tool-bar items="what"></tool-bar><tool-bar items="body sketch attach map validate | point line plane lcs binder clone sheep"></tool-bar><tool-bar items="pad revol loft pipe helix prim v | pocket hole groove subloft subpipe subhelix subprim v | mirror linear polar multi | fillet chamfer draft thick | bool"></tool-bar><tool-bar last items="mlin mang | mref mclr mtog m3d mdel"></tool-bar></tool-row>
    <main><combo-view></combo-view><div class="v"><model-view></model-view><view-tabs></view-tabs></div></main><report-view></report-view><status-bar></status-bar>`; }
});
</script>
</body>
</html>
